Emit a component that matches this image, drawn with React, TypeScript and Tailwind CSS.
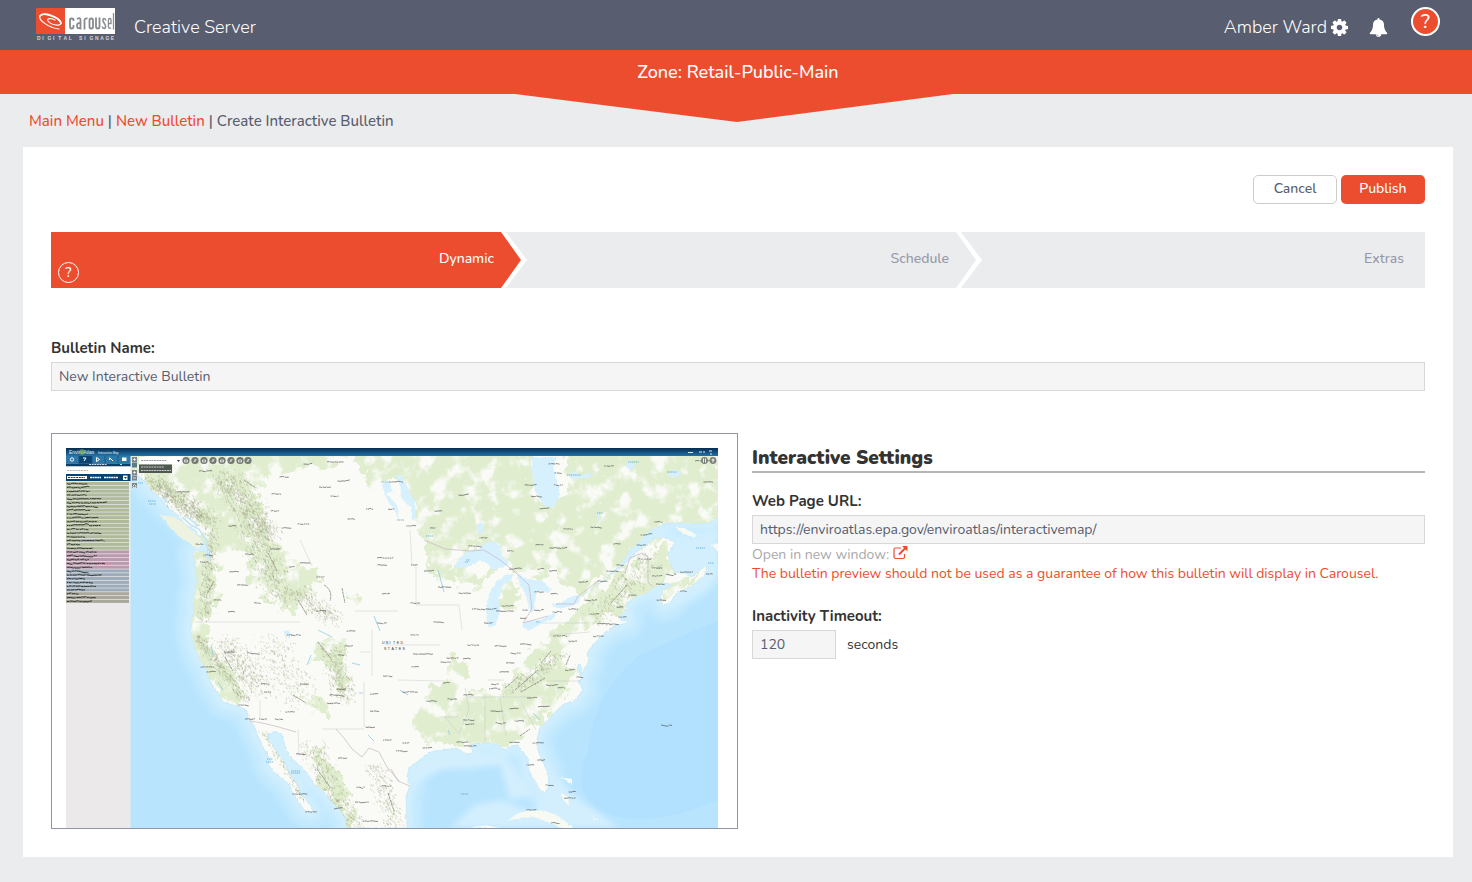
import { useState } from "react";

function random(seed: number) {
  let s = seed;
  return () => {
    s = (s * 16807) % 2147483647;
    return s / 2147483647;
  };
}

type Range = [x1: number, y1: number, x2: number, y2: number, spread: number, count: number];

const RANGES: Range[] = [
  [150, 478, 208, 522, 13, 420],
  [222, 474, 268, 535, 16, 420],
  [166, 520, 196, 545, 3, 60],
  [212, 530, 204, 620, 7, 190],
  [250, 525, 282, 600, 16, 260],
  [296, 590, 335, 620, 12, 150],
  [196, 635, 246, 700, 6, 170],
  [222, 640, 260, 690, 16, 240],
  [330, 645, 345, 700, 12, 180],
  [270, 640, 300, 700, 22, 160],
  [262, 730, 305, 800, 4, 80],
  [312, 745, 352, 828, 12, 240],
  [375, 765, 395, 828, 10, 130],
  [508, 692, 560, 655, 10, 120],
  [595, 620, 650, 555, 14, 150],
];

function texture(seed: number) {
  const next = random(seed);
  return RANGES.map(([x1, y1, x2, y2, spread, count]) => {
    let d = "";
    for (let i = 0; i < count; i++) {
      const t = next();
      const x = x1 + (x2 - x1) * t + (next() + next() - 1) * spread * 1.3;
      const y = y1 + (y2 - y1) * t + (next() + next() - 1) * spread * 0.7;
      d += `M${x.toFixed(1)} ${y.toFixed(1)}l${(next() * 1.4).toFixed(1)} ${(0.6 + next() * 1.8).toFixed(1)}`;
    }
    return d;
  }).join("");
}

const RIDGES_DARK = texture(71);
const RIDGES_SOFT = texture(913);

const PLACES: [number, number, number][] = [
  [335, 462, 16], [307, 464, 7], [205, 471, 12], [284, 477, 9], [183, 492, 12], [276, 494, 9],
  [325, 487, 12], [334, 496, 7], [343, 481, 11], [275, 511, 8], [286, 528, 9], [303, 524, 11],
  [351, 519, 7], [369, 509, 6], [391, 509, 6], [232, 526, 7], [199, 544, 7], [208, 555, 7],
  [204, 562, 8], [249, 554, 8], [234, 572, 9], [242, 585, 10], [275, 549, 10], [305, 563, 10],
  [292, 567, 6], [320, 577, 7], [217, 600, 7], [257, 603, 6], [321, 611, 10], [385, 558, 16],
  [382, 565, 9], [386, 594, 8], [231, 612, 6], [382, 623, 10], [293, 635, 12], [351, 631, 9],
  [348, 646, 7], [207, 667, 13], [211, 672, 9], [229, 652, 10], [253, 653, 12], [243, 705, 11],
  [250, 719, 10], [263, 719, 8], [279, 719, 8], [290, 712, 9], [265, 684, 7], [267, 692, 6],
  [304, 684, 8], [341, 655, 6], [336, 695, 13], [333, 703, 12], [341, 689, 8], [387, 676, 8],
  [374, 694, 8], [374, 711, 8], [370, 727, 9], [387, 740, 8], [300, 754, 8], [342, 758, 8],
  [300, 794, 15], [311, 812, 11], [338, 809, 8], [360, 787, 7], [362, 802, 14], [386, 786, 9],
  [370, 821, 15], [396, 482, 12], [463, 495, 9], [438, 511, 7], [411, 526, 9], [433, 528, 6],
  [483, 538, 7], [475, 546, 13], [510, 551, 6], [539, 545, 7], [558, 548, 17], [568, 529, 9],
  [596, 527, 11], [616, 544, 6], [530, 485, 11], [536, 496, 10], [544, 509, 9], [554, 464, 11],
  [558, 473, 7], [558, 485, 8], [609, 466, 10], [658, 522, 8], [646, 535, 11], [641, 545, 9],
  [644, 559, 11], [612, 571, 11], [620, 565, 7], [515, 569, 12], [553, 571, 8], [541, 569, 7],
  [583, 582, 9], [602, 581, 9], [573, 609, 9], [557, 612, 9], [554, 594, 7], [539, 592, 9],
  [507, 606, 11], [504, 611, 16], [525, 610, 5], [538, 610, 8], [523, 618, 6], [484, 609, 24],
  [488, 623, 8], [464, 593, 11], [444, 587, 12], [414, 565, 6], [429, 571, 10], [415, 603, 9],
  [438, 622, 10], [590, 600, 11], [632, 595, 7], [620, 607, 7], [594, 614, 9], [622, 617, 7],
  [607, 624, 20], [657, 568, 10], [657, 576, 10], [660, 584, 8], [671, 574, 10], [686, 572, 12],
  [683, 591, 6], [661, 600, 9], [709, 574, 6], [705, 461, 20], [708, 482, 9], [414, 635, 7],
  [560, 636, 14], [573, 641, 9], [598, 636, 10], [525, 644, 10], [500, 646, 11], [473, 645, 11],
  [423, 654, 20], [452, 658, 11], [467, 659, 8], [445, 662, 9], [515, 653, 9], [510, 663, 8],
  [504, 672, 9], [415, 667, 7], [410, 692, 15], [446, 683, 6], [452, 699, 9], [431, 701, 10],
  [468, 695, 9], [495, 684, 8], [494, 689, 10], [552, 685, 12], [561, 688, 7], [580, 677, 7],
  [570, 670, 10], [532, 698, 10], [543, 707, 10], [514, 709, 9], [496, 711, 11], [468, 720, 10],
  [469, 724, 8], [500, 723, 9], [519, 721, 9], [514, 742, 9], [538, 743, 11], [462, 742, 11],
  [470, 746, 12], [427, 748, 9], [406, 743, 7], [402, 751, 12], [541, 760, 7], [530, 765, 7],
  [549, 785, 7], [572, 792, 7], [570, 798, 12], [531, 810, 9], [555, 823, 8], [666, 725, 10],
];

/* Tiny uneven strokes, the way place names look at this scale. */
function scribble(x: number, y: number, w: number, next: () => number) {
  let d = `M${x} ${y}`;
  let used = 0;
  while (used < w) {
    const step = 0.7 + next() * 1.3;
    d += `l${step.toFixed(1)} ${((next() - 0.5) * 0.9).toFixed(1)}`;
    used += step;
    if (next() > 0.7) {
      used += 0.5;
      d += `M${(x + used).toFixed(1)} ${y}`;
    }
  }
  return d;
}

const nextMark = random(388);
const PLACE_MARKS = PLACES.map(([x, y, w]) => scribble(x - w / 2, y, w, nextMark)).join("");

const LAYERS: [string, number][] = [
  ["#afba9b", 18],
  ["#bb99ae", 5],
  ["#9cacbb", 6],
  ["#aaa79c", 3],
];
const LAYER_ROWS = LAYERS.flatMap(([color, count]) => Array.from({ length: count }, () => color));
const ROW_MARKS = [19, 22, 23, 20, 34, 39, 30, 22, 21, 30, 28, 32, 20, 34, 18, 37, 12, 26, 29, 30, 21, 37, 25, 21, 34, 16, 26, 28, 18, 11, 27, 25];
const ROW_SCRIBBLES = ROW_MARKS.map((w, i) => scribble(67, 483.7 + i * 3.8, w, nextMark)).join("");

const LAND =
  "M131 448H718V516L710 523L690 523L667 523L650 530L640 541L630 550L622 563L604 580L580 597L596 586L625 564L635 553L647 545L655 538L663 537L675 542L671 549L668 553L670 563L674 572L683 573L692 577L702 568L707 566L704 576L690 587L677 593L670 603L663 605L660 598L663 590L672 585L667 583L656 586L647 593L637 596L627 603L624 612L620 616L622 621L629 619L627 623L614 626L600 637L593 645L587 653L589 662L585 667L582 674L580 664L577 668L582 679L578 681L583 690L575 700L563 705L557 710L547 721L540 727L537 740L538 751L542 760L548 774L549 785L545 793L540 790L535 781L530 775L528 766L529 760L522 750L517 745L511 746L505 750L498 744L488 743L477 743L470 745L474 753L466 754L457 748L443 750L430 752L417 762L409 768L407 777L410 785L406 797L407 828H347L345 818L340 810L333 803L323 791L313 783L308 774L297 763L289 756L285 747L283 736L274 731L268 734L269 740L277 752L285 763L290 775L297 783L301 795L307 801L313 809L312 813L305 811L297 800L291 790L289 784L280 777L274 772L268 764L271 760L264 749L258 736L254 725L250 720L246 710L240 707L223 702L218 692L213 687L209 678L207 670L200 660L196 650L193 642L191 625L194 610L193 600L197 583L195 566L193 552L205 552L208 563L210 551L204 543L196 531L185 524L178 515L168 508L161 499L151 490L144 481L131 469Z";

const LAKES = [
  "M532 457H557L553 467L557 481L560 494L554 506L548 508L540 501L535 490L532 475Z",
  "M453 567L461 557L467 552L479 549L487 542L497 542L501 549L502 556L510 563L501 568L493 570L488 564L480 560L471 566L460 568Z",
  "M487 625L486 607L489 594L495 583L505 575L514 574L509 582L503 584L499 598L500 611L496 624L491 628Z",
  "M517 573L527 579L543 581L551 589L549 593L537 591L535 601L534 612L530 610L525 593L519 583Z",
  "M522 625L528 621L540 620L557 612L554 618L539 625L530 630L524 629Z",
  "M552 604L562 602L572 596L581 595L578 604L565 608L554 608Z",
  "M395 475L402 476L408 488L415 502L416 518L412 521L411 507L401 498L400 485Z",
  "M477 526L480 522L484 525L483 533L478 533Z",
  "M382 485L390 480L392 492L386 493L397 505L399 521L394 508L388 502Z",
  "M283 631L288 630L292 636L289 638Z",
  "M567 476L575 471L579 475L594 473L588 478L574 479Z",
  "M627 461L635 465L631 471L625 466L632 460Z",
  "M666 475L675 469L682 473L675 478Z",
  "M598 511L600 518L597 525Z",
];

const FOREST = [
  "M131 440H340V466L300 468L268 474L258 494L268 520L288 560L320 572L308 592L292 610L266 604L252 586L246 556L228 548L214 574L216 600L206 626L210 646L224 664L238 680L240 704L224 700L200 670L186 640L188 560L206 528L180 510L156 492L128 468Z",
  "M340 440H530L534 495L548 508L575 480L640 500L690 510L718 505L710 533H667L640 550L610 572L582 594L552 574L515 572L500 545L480 545L452 570L492 574L480 588L440 582L424 548L414 510L402 480L370 484Z",
  "M560 440H724V520L640 515L575 500Z",
  "M496 590L508 580L524 592L520 606L500 608Z",
  "M597 592L640 556L668 540L674 574L646 594L620 610L580 630L556 656L578 668L560 700L540 724L508 748H476L420 740L410 722L440 680L456 656L470 668L456 692L500 694L530 652L560 628Z",
  "M662 590L704 568L680 594L664 604Z",
  "M160 516L176 518L204 544L196 549L178 535Z",
  "M302 694L330 702L328 716L304 710Z",
  "M316 742L340 776L356 828H344L318 780Z",
  "M322 640L342 642L348 682L340 692L330 668L314 656Z",
  "M348 592L364 600L352 608Z",
];

const TOOL_X = [186, 195, 204, 213, 222, 231, 240, 248];

function MapPreview() {
  return (
    <svg viewBox="66 448 652 380" className="block h-auto w-full" role="img" aria-label="Interactive map preview">
      <defs>
        <linearGradient id="mapHeader" x1="0" y1="0" x2="0" y2="1">
          <stop offset="0" stopColor="#062b4d" />
          <stop offset="1" stopColor="#2273ad" />
        </linearGradient>
        <filter id="ragged" x="-5%" y="-5%" width="110%" height="110%">
          <feTurbulence type="fractalNoise" baseFrequency="0.08" numOctaves="4" seed="4" result="n" />
          <feDisplacementMap in="SourceGraphic" in2="n" scale="26" xChannelSelector="R" yChannelSelector="G" result="d" />
          <feTurbulence type="fractalNoise" baseFrequency="0.06" numOctaves="6" seed="9" />
          <feColorMatrix values="0 0 0 0 1  0 0 0 0 1  0 0 0 0 1  5 0 0 0 -1.5" result="m" />
          <feComposite in="d" in2="m" operator="in" />
        </filter>
        <filter id="coast" x="-5%" y="-5%" width="110%" height="110%">
          <feTurbulence type="fractalNoise" baseFrequency="0.3" numOctaves="2" seed="3" />
          <feDisplacementMap in="SourceGraphic" scale="3" xChannelSelector="R" yChannelSelector="G" />
        </filter>
        <filter id="shelf">
          <feGaussianBlur stdDeviation="3" />
        </filter>
        <clipPath id="land">
          <path d={LAND} />
        </clipPath>
      </defs>

      <rect x="66" y="448" width="652" height="380" fill="#b8e4fe" />
      <path d="M640 655Q595 690 588 750Q570 790 600 812Q650 830 718 800V620Z" fill="#b2e1ff" />
      <g filter="url(#shelf)">
        <path d={LAND} fill="none" stroke="#c4eafe" strokeWidth="32" strokeLinejoin="round" />
        <path d={LAND} fill="none" stroke="#d2effe" strokeWidth="12" strokeLinejoin="round" />
        <path d="M670 540L718 530V575L705 590L670 610ZM545 765L580 800L620 828H450L475 805L500 800L535 812ZM410 770L430 756L500 752L535 795L510 800L500 765L440 770L415 785Z" fill="#d3effe" />
      </g>
      <g filter="url(#coast)">
        <path d={LAND} fill="#fafbf7" stroke="#b9e2f2" strokeWidth="0.6" />
        <path d="M160 515L173 517L184 523L203 542L198 549L188 542L178 536Z" fill="#edf3e0" />
        <path d="M508 821L516 814L530 810L546 811L560 817L573 828H562L548 822L534 817L518 818ZM675 528L684 528L696 534L695 538L684 534ZM471 828Q484 823 500 828ZM561 793L568 797L569 806L563 799ZM560 777L572 779L572 785L566 780ZM593 815L598 820L594 819ZM712 545L718 543V552Z" fill="#f7faf2" />
      </g>
      <g clipPath="url(#land)">
        <g filter="url(#ragged)" fill="#e0edcf">
          {FOREST.map((d) => (
            <path key={d} d={d} />
          ))}
        </g>
        <path d={RIDGES_SOFT} stroke="#b9cc9e" strokeWidth="0.8" opacity="0.6" fill="none" />
        <path d={RIDGES_DARK} stroke="#918778" strokeWidth="0.6" opacity="0.55" fill="none" />
      </g>
      <g filter="url(#coast)" fill="#d6f0fe">
        {LAKES.map((d) => (
          <path key={d} d={d} />
        ))}
      </g>
      <path d="M182 517L191 525L199 529L207 541L208 556M185 515L197 525M168 503L162 497" stroke="#bfe4f8" strokeWidth="1.6" fill="none" />

      <g fill="none" stroke="#c7b5c4" strokeWidth="0.7">
        <path d="M424 540L445 549L470 551L484 550L500 560L514 571L529 585L532 609L523 623L548 616M556 604L574 604L578 596L600 580M625 573L630 558L642 553L648 557L648 582L653 587" />
        <path d="M250 721L262 723L275 726L296 732M336 729L344 738L352 749L362 757L369 748L379 752L387 767L399 781M391 769L398 781L410 786" />
      </g>
      <g fill="none" stroke="#c5c3c9" strokeWidth="0.5" opacity="0.85">
        <path d="M195 622H300M322 729H364M364 682V727M372 630V676M355 611H398M416 566V605H459M467 697H530M547 681H581M487 680H504M440 717H458M385 645H440M360 652H370M445 717L460 735M300 540L312 566M398 680L445 681M459 605L462 630M520 700L536 730M485 697V742M500 698L506 736M410 530L412 566M260 700V718M298 729L299 756M545 623H590M550 635L590 632M465 688L469 710L459 733" />
      </g>
      <path d="M211 645L213 655M218 682L223 690M368 735L374 741M400 690L408 695M352 663L360 665M311 655L307 665M359 693H363M533 713L540 720M448 730L450 735M438 570L444 592M374 616L380 631M318 630L332 637" stroke="#8fcbe6" strokeWidth="0.8" fill="none" />
      <path d="M298 600L307 615M324 585Q333 590 330 601M244 480L256 488M268 553L277 571M214 581L207 594M505 688L518 677M515 690L538 670M521 692L545 678M541 663L551 651M611 603L627 585M318 642L332 660M225 657L233 671M293 695L306 703M566 665L570 655M520 736L530 729M317 769L330 787M388 793L394 811M342 588L345 603" stroke="#96948a" strokeWidth="0.9" strokeDasharray="3 0.6" fill="none" />

      <path d={PLACE_MARKS} stroke="#333" strokeWidth="0.7" opacity="0.8" fill="none" />
      <g stroke="#52aacb" strokeWidth="0.8" strokeDasharray="1.3 0.6">
        <path d="M148 501h8M149 504h7M267 759h6M266 762h7M291 771h9M291 773h9M138 483h5M381 482h9M397 520h7M426 536h7M465 562h4M567 475h14M628 462h11M667 472h10M597 513h6M696 548h9M708 563h6M461 794h7M536 622h4M466 560h4" />
      </g>
      <g fontFamily="Liberation Sans" fontSize="3.6" fill="#303030">
        {["UNITED", "STATES"].map((word, row) => (
          <text key={word} y={643.5 + row * 6}>
            {[...word].map((c, i) => (
              <tspan key={i} x={(row ? 384 : 382) + i * 3.7}>{c}</tspan>
            ))}
          </text>
        ))}
      </g>

      <rect x="66" y="456" width="64.500" height="372" fill="#ebe9ea" />
      <rect x="66" y="448" width="652" height="8" fill="url(#mapHeader)" />
      <g fontFamily="Liberation Sans" fill="#e8f2e8">
        <text x="69" y="454" fontSize="5">EnviroAtlas</text>
        <text x="98" y="454" fontSize="3">Interactive Map</text>
      </g>
      <circle cx="82" cy="452" r="2.800" fill="#86b65b" opacity="0.7" />
      <path d="M688 452.500h5M699 452h3M703 452h2M709 451h3M710 454h2" stroke="#dceaf4" strokeWidth="1.200" />

      <rect x="66" y="456" width="64.500" height="7.500" fill="#2d77a9" />
      <rect x="79" y="456" width="13" height="7.500" fill="#0b4473" />
      <path d="M79 456v7.500M92 456v7.500M105 456v7.500M118 456v7.500" stroke="#144f7c" strokeWidth="0.700" />
      <g fill="none" stroke="#fff" strokeWidth="1">
        <circle cx="72" cy="459.500" r="1.700" />
        <path d="M83 458h3l-2 3M96.500 457.500v4l3-2zM109 458l2 1 2 2M109 460l2-2" />
        <rect x="122.500" y="458" width="3.500" height="2.500" fill="#fff" />
      </g>
      <rect x="66" y="463.500" width="64.500" height="3" fill="#083f6b" />
      <path d="M89 464.500h18M120 464.500h2" stroke="#fff" strokeWidth="0.8" strokeDasharray="2 0.6" />
      <rect x="66" y="466.500" width="64.500" height="7.500" fill="#fff" />
      <path d="M67 470.500h21" stroke="#aaa" strokeWidth="0.900" strokeDasharray="2 0.8" />
      <rect x="66" y="474" width="64.500" height="7" fill="#07416f" />
      <rect x="67" y="476" width="20" height="3" fill="#fff" />
      <path d="M68 477.500h17" stroke="#24384b" strokeWidth="1" strokeDasharray="2 0.7" />
      <path d="M90 477.500h11M104 477.500h14" stroke="#fff" strokeWidth="1.300" strokeDasharray="2 0.4" />
      <rect x="123" y="475.500" width="4.500" height="4.500" fill="#fff" />
      <path d="M124 477h3l-1.500 2z" fill="#0b4473" />
      {LAYER_ROWS.map((color, i) => (
        <rect key={i} x="66" y={482 + i * 3.8} width="63" height="3.1" fill={color} />
      ))}
      <path d={ROW_SCRIBBLES} stroke="#202820" strokeWidth="0.9" fill="none" />

      <g fill="#7d858a">
        <rect x="132" y="457" width="5" height="5" />
        <rect x="132" y="462.500" width="5" height="5" fill="#5a7c87" />
        <rect x="132" y="470" width="5" height="5" />
        <rect x="132" y="475.500" width="5" height="5" />
        <rect x="132" y="483" width="5" height="5" />
      </g>
      <path d="M133 459.500h3M134.500 458v3M133 472.500h3M134.500 471v3M133 478h3M133 486l1.500-1.500 1.500 1.500v1.500h-3z" stroke="#fff" strokeWidth="0.700" fill="none" />
      <rect x="139" y="457" width="42" height="7" fill="#fff" />
      <path d="M141 460.500h26" stroke="#9a9a9a" strokeWidth="1" strokeDasharray="2 0.6" />
      <path d="M177 460h3l-1.500 2z" fill="#333" />
      <rect x="139" y="464.500" width="33" height="8.500" fill="#505853" />
      <path d="M141 467h23M141 470.500h30" stroke="#e8e8e8" strokeWidth="0.800" strokeDasharray="2 0.6" />
      {TOOL_X.map((x, i) => (
        <g key={x}>
          <circle cx={x} cy="460.500" r="3.600" fill="#737872" />
          <path d={i % 2 ? `M${x - 1.5} 462l3-3M${x} 459v3` : `M${x - 1.5} 460h3v2h-3z`} stroke="#f1f1f1" strokeWidth="0.800" fill="none" />
        </g>
      ))}
      <circle cx="704.500" cy="460.500" r="3.400" fill="#7c807b" />
      <circle cx="713" cy="460.500" r="3.400" fill="#7c807b" />
      <path d="M703.500 458.500v4M705.500 458.500v4M713 458.500v4M711.500 460h3" stroke="#fff" strokeWidth="0.900" />
    </svg>
  );
}

function Logo() {
  return (
    <svg width="80" height="32" viewBox="0 0 80 32" role="img" aria-label="Carousel Digital Signage" className="mb-[2px] shrink-0">
      <rect width="30" height="26" fill="#ed4d2f" />
      <rect x="29" width="50" height="26" fill="#fff" />
      <g fill="none" stroke="#fff" strokeLinecap="round">
        <path d="M23 21C13 20 2 12 4 8C6 4 24 9 25 15C25 19 15 17 12 13C10 10 16 10 19 12" strokeWidth="1.200" />
        <path d="M4 8C8 3.500 23 9 25 15" strokeWidth="1.800" />
      </g>
      <g fill="none" stroke="#888b90" strokeWidth="1.800">
        <path d="M37.500 13V12Q37.500 10.500 35.700 10.500Q34 10.500 34 12V18.500Q34 20.500 35.700 20.500Q37.500 20.500 37.500 18.500V17" />
        <path d="M41 11Q44.500 9 44.500 12V21.500M44.500 15Q41 14.500 41 18Q41 21.500 44.500 19.500" />
        <path d="M48.500 21.500V12.500Q48.500 10 51.500 10.500" />
        <rect x="53.500" y="10.500" width="3.500" height="10" rx="1.700" />
        <path d="M60 9.500V18.500Q60 20.500 61.800 20.500Q63.500 20.500 63.500 18.500V9.500" />
        <path d="M69.800 12.500Q69.500 10.500 68 10.500Q66 11.500 67.500 14L69 16.500Q70.500 19.500 68.500 20.500Q66.500 20.500 66.300 18.500" strokeWidth="1.500" />
        <path d="M72.400 15.500H75V12Q75 10.500 73.700 10.500Q72.400 10.500 72.400 12V18.500Q73 21 75 20" strokeWidth="1.300" />
        <path d="M77.500 5V21.500" strokeWidth="1.300" />
      </g>
      <text y="31.500" fontSize="5" fontWeight="700" fill="#d5d7dd" fontFamily="Liberation Sans">
        {[..."DIGITAL"].map((c, i) => (
          <tspan key={i} x={1 + i * 5.3}>{c}</tspan>
        ))}
        {[..."SIGNAGE"].map((c, i) => (
          <tspan key={i} x={43 + i * 5.3}>{c}</tspan>
        ))}
      </text>
    </svg>
  );
}

function GearIcon() {
  return (
    <svg width="17" height="17" viewBox="0 128 1536 1536" fill="currentColor" aria-hidden="true">
      <path d="M1024 896q0-106-75-181t-181-75-181 75-75 181 75 181 181 75 181-75 75-181zm512-109v222q0 12-8 23t-20 13l-185 28q-19 54-39 91 35 50 107 138 10 12 10 25t-9 23q-27 37-99 108t-94 71q-12 0-26-9l-138-108q-44 23-91 38-16 136-29 186-7 28-36 28h-222q-14 0-24.500-8.500t-11.500-21.500l-28-184q-49-16-90-37l-141 107q-10 9-25 9-14 0-25-11-126-114-165-168-7-10-7-23 0-12 8-23 15-21 51-66.500t54-70.500q-27-50-41-99l-183-27q-13-2-21-12.500t-8-23.500v-222q0-12 8-23t19-13l186-28q14-46 39-92-40-57-107-138-10-12-10-24 0-10 9-23 26-36 98.500-107.500t94.500-71.500q13 0 26 10l138 107q44-23 91-38 16-136 29-186 7-28 36-28h222q14 0 24.500 8.500t11.500 21.500l28 184q49 16 90 37l142-107q9-9 24-9 13 0 25 10 129 119 165 170 7 8 7 22 0 12-8 23-15 21-51 66.500t-54 70.500q26 50 41 98l183 28q13 2 21 12.500t8 23.500z" />
    </svg>
  );
}

function BellIcon() {
  return (
    <svg width="19" height="19" viewBox="0 0 1792 1792" fill="currentColor" aria-hidden="true">
      <path d="M912 1696q0-16-16-16-59 0-101.500-42.500t-42.500-101.500q0-16-16-16t-16 16q0 73 51.500 124.500t124.500 51.500q16 0 16-16zm816-288q0 52-38 90t-90 38h-448q0 106-75 181t-181 75-181-75-75-181h-448q-52 0-90-38t-38-90q50-42 91-88t85-119.500 74.500-158.500 50-206 19.500-260q0-152 117-282.500t307-158.500q-8-19-8-39 0-40 28-68t68-28 68 28 28 68q0 20-8 39 190 28 307 158.500t117 282.500q0 139 19.500 260t50 206 74.500 158.500 85 119.500 91 88z" />
    </svg>
  );
}

function StepArrow({ active = false }: { active?: boolean }) {
  return (
    <svg viewBox="0 0 26 56" className="absolute top-0 left-full z-10 h-full w-[26px]" preserveAspectRatio="none" aria-hidden="true">
      <path d="M0 0H5L26 28L5 56H0Z" fill="#fff" />
      <path d="M0 0L20 28L0 56Z" fill={active ? "#ed4d2f" : "#ebeced"} />
    </svg>
  );
}

const inputClass = "h-[29px] border border-[#d8d8d8] bg-[#f5f5f5] px-[7px] text-[14px] text-[#585d6f] outline-none focus:border-[#ed4d2f]";
const labelClass = "block text-[15px] leading-5 font-bold text-[#333]";

export default function App() {
  const [name, setName] = useState("New Interactive Bulletin");
  const [url, setUrl] = useState("https://enviroatlas.epa.gov/enviroatlas/interactivemap/");
  const [timeout, setTimeoutValue] = useState("120");

  return (
    <div className="min-h-screen bg-[#ebeced] pb-[25px] font-['Nunito','Open_Sans',sans-serif] text-[14px] text-[#585d6f]">
      <header className="flex h-[50px] items-center justify-between bg-[#585d6f] pr-8 pl-9 text-white">
        <div className="flex items-center gap-[18px]">
          <Logo />
          <span className="pt-1 text-[18px] font-light">Creative Server</span>
        </div>
        <div className="flex items-center">
          <button type="button" className="flex items-center gap-1 pt-1 text-[18px] font-light">
            Amber Ward
            <GearIcon />
          </button>
          <button type="button" aria-label="Notifications" className="ml-[21px] pt-1">
            <BellIcon />
          </button>
          <button type="button" aria-label="Help" className="mb-[7px] ml-[23px] flex size-[29px] items-center justify-center rounded-full border-2 border-white bg-[#ed4d2f] text-[20px] leading-none font-medium">
            ?
          </button>
        </div>
      </header>

      <div className="relative flex h-11 items-center justify-center bg-[#ed4d2f] pl-1 text-white">
        <h1 className="text-[18px] font-medium">Zone: Retail-Public-Main</h1>
        <svg viewBox="0 0 442 28" className="absolute top-full left-1/2 h-7 w-[442px] -translate-x-1/2" aria-hidden="true">
          <path d="M0 0H438L222 28Z" fill="#ed4d2f" />
        </svg>
      </div>

      <nav aria-label="Breadcrumb" className="flex h-[53px] items-center gap-1 pt-px pl-[29px] text-[15px] font-medium">
        <a href="#menu" className="text-[#ed4d2f]">Main Menu</a>
        <span>|</span>
        <a href="#new" className="text-[#ed4d2f]">New Bulletin</a>
        <span>|</span>
        <span>Create Interactive Bulletin</span>
      </nav>

      <main className="mr-[19px] ml-[23px] bg-white p-7">
        <div className="flex justify-end gap-1">
          <button type="button" className="h-[29px] w-[84px] rounded-[5px] border border-[#ccc] bg-white pb-[2px] leading-5 font-medium">
            Cancel
          </button>
          <button type="button" className="h-[29px] w-[84px] rounded-[5px] bg-[#ed4d2f] pb-[2px] leading-5 font-medium text-white">
            Publish
          </button>
        </div>

        <ol className="mt-7 grid h-14 grid-cols-[450fr_455fr_469fr] leading-5 font-medium">
          <li className="relative flex items-center justify-between bg-[#ed4d2f] pr-[7px] pb-[3px] pl-[7px] text-white">
            <button type="button" aria-label="Help with this step" className="mb-[2px] flex size-[21px] items-center justify-center self-end rounded-full border border-white text-[14px] leading-none">
              ?
            </button>
            Dynamic
            <StepArrow active />
          </li>
          <li className="relative flex items-center justify-end bg-[#ebeced] pr-[7px] pb-[3px] text-[#9499aa]">
            Schedule
            <StepArrow />
          </li>
          <li className="flex items-center justify-end bg-[#ebeced] pr-[21px] pb-[3px] text-[#9499aa]">Extras</li>
        </ol>

        <div className="mt-[50px]">
          <label htmlFor="name" className={labelClass}>Bulletin Name:</label>
          <input id="name" value={name} onChange={(e) => setName(e.target.value)} className={`${inputClass} mt-1 block w-full`} />
        </div>

        <div className="mt-[42px] grid grid-cols-[687fr_673fr] items-start gap-[14px]">
          <div className="border border-[#9194a5] pt-[14px] pr-[19px] pl-[14px]">
            <MapPreview />
          </div>

          <section className="pt-3">
            <h2 className="border-b-2 border-[#b5b5b5] text-[19px] leading-[26px] font-black text-[#333]">
              Interactive Settings
            </h2>
            <label htmlFor="url" className={`${labelClass} mt-[18px]`}>Web Page URL:</label>
            <input id="url" type="url" value={url} onChange={(e) => setUrl(e.target.value)} className={`${inputClass} mt-1 block w-full`} />
            <p className="flex h-5 items-center gap-1 text-[#a9a9a9]">
              Open in new window:
              <a href={url} target="_blank" rel="noreferrer" aria-label="Open in new window" className="pb-[2px] text-[#ed4d2f]">
                <svg width="15" height="14" viewBox="0 0 15 14" fill="none" stroke="currentColor" aria-hidden="true">
                  <path d="M8 2H2.500Q1 2 1 3.500V11Q1 12.500 2.500 12.500H10Q11.500 12.500 11.500 11V8" strokeWidth="1.200" />
                  <path d="M6 8.500L12.500 2" strokeWidth="1.900" />
                  <path d="M9 0H14.500V5.500Z" fill="currentColor" stroke="none" />
                </svg>
              </a>
            </p>
            <p className="leading-5 text-[#ed4d2f]">
              The bulletin preview should not be used as a guarantee of how this bulletin will display in Carousel.
            </p>
            <label htmlFor="timeout" className={`${labelClass} mt-[22px]`}>Inactivity Timeout:</label>
            <div className="mt-1 flex items-center gap-[11px] text-[#333]">
              <input id="timeout" inputMode="numeric" value={timeout} onChange={(e) => setTimeoutValue(e.target.value)} className={`${inputClass} w-[84px]`} />
              <span>seconds</span>
            </div>
          </section>
        </div>
      </main>
    </div>
  );
}
